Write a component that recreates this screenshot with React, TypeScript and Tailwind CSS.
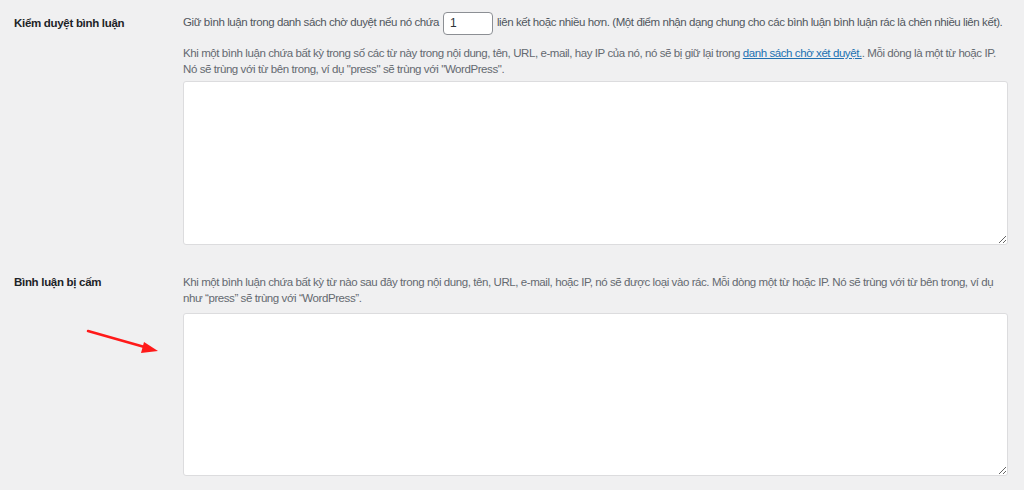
import React from 'react';

const font = { fontFamily: '"Liberation Sans", Arial, sans-serif' };

export default function App() {
    return (
        <div className="relative w-[1024px] h-[490px] bg-[#f0f0f1] text-[11.5px] tracking-[-0.42px] text-[#1d2327] overflow-hidden" style={font}>
            {/* Comment moderation */}
            <div className="flex pl-[14px] pt-[12px]">
                <div className="w-[169px] font-bold leading-[22px] tracking-[-0.3px]">Kiểm duyệt bình luận</div>
                <div className="w-[825px] text-[#50575e]">
                    <div className="flex items-center h-[22px] whitespace-nowrap">
                        <span>Giữ bình luận trong danh sách chờ duyệt nếu nó chứa</span>
                        <input
                            type="text"
                            defaultValue="1"
                            className="mx-[4px] w-[50px] h-[23px] px-[6px] text-[12px] text-[#2c3338] bg-white border border-[#8c8f94] rounded-[4px] outline-none"
                        />
                        <span>liên kết hoặc nhiều hơn. (Một điểm nhận dạng chung cho các bình luận bình luận rác là chèn nhiều liên kết).</span>
                    </div>
                    <p className="mt-[11px] leading-[16px] text-[#646970] whitespace-nowrap">
                        Khi một bình luận chứa bất kỳ trong số các từ này trong nội dung, tên, URL, e-mail, hay IP của nó, nó sẽ bị giữ lại trong{' '}
                        <a href="#" className="text-[#2271b1] underline">danh sách chờ xét duyệt.</a>. Mỗi dòng là một từ hoặc IP.
                        <br />
                        Nó sẽ trùng với từ bên trong, ví dụ "press" sẽ trùng với "WordPress".
                    </p>
                    <textarea className="mt-[4px] block w-[825px] h-[164px] bg-white border border-[#dcdcde] rounded-[3px] outline-none" />
                </div>
            </div>

            {/* Disallowed comment keys */}
            <div className="flex pl-[14px] pt-[29px]">
                <div className="w-[169px] font-bold leading-[16px] tracking-[-0.3px]">Bình luận bị cấm</div>
                <div className="w-[825px]">
                    <p className="leading-[16px] text-[#646970] whitespace-nowrap">
                        Khi một bình luận chứa bất kỳ từ nào sau đây trong nội dung, tên, URL, e-mail, hoặc IP, nó sẽ được loại vào rác. Mỗi dòng một từ hoặc IP. Nó sẽ trùng với từ bên trong, ví dụ
                        <br />
                        như “press” sẽ trùng với “WordPress”.
                    </p>
                    <textarea className="mt-[7px] block w-[825px] h-[163px] bg-white border border-[#dcdcde] rounded-[3px] outline-none" />
                </div>
            </div>

            {/* annotation arrow */}
            <svg className="absolute left-[84px] top-[326px]" width="80" height="32" viewBox="0 0 80 32">
                <line x1="4" y1="5" x2="64" y2="22" stroke="#ff1a1a" strokeWidth="2.5" strokeLinecap="round" />
                <polygon points="74,25 60,16 57,27" fill="#ff1a1a" />
            </svg>
        </div>
    );
}
